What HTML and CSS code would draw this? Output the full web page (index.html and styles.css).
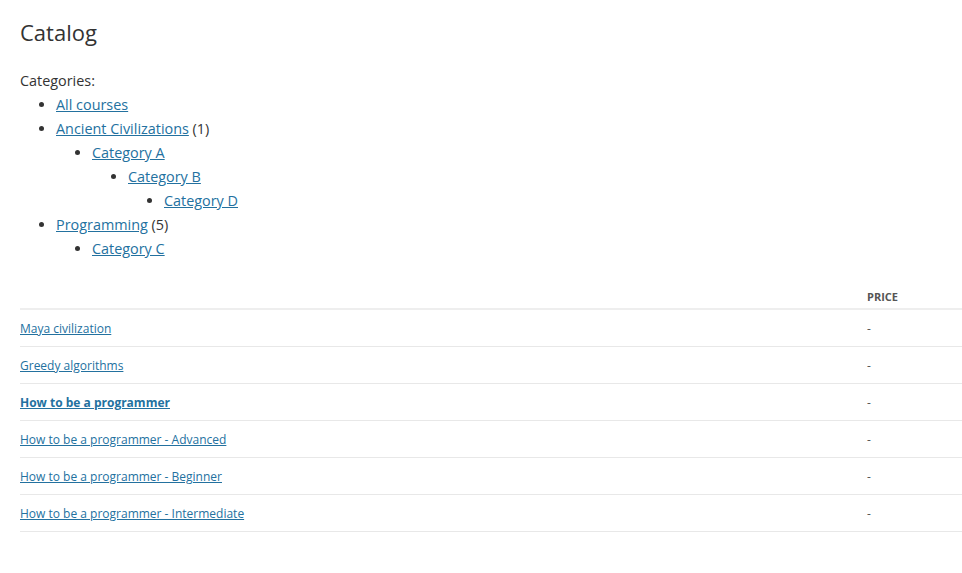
FILE: index.html
```html
<!DOCTYPE html>
<html lang="en">
  <head>
    <meta charset="UTF-8" />
    <title>Catalog</title>
    <link rel="stylesheet" href="styles.css">
  </head>
  <body>
    <div class="page">
      <h1>Catalog</h1>

      <div class="categories">
        <p>Categories:</p>
        <ul>
          <li><a href="#">All courses</a></li>
          <li>
            <a href="#">Ancient Civilizations</a> (1)
            <ul>
              <li>
                <a href="#">Category A</a>
                <ul>
                  <li>
                    <a href="#">Category B</a>
                    <ul>
                      <li><a href="#">Category D</a></li>
                    </ul>
                  </li>
                </ul>
              </li>
            </ul>
          </li>
          <li>
            <a href="#">Programming</a> (5)
            <ul>
              <li><a href="#">Category C</a></li>
            </ul>
          </li>
        </ul>
      </div>

      <!-- course list -->
      <table class="courses">
        <thead>
          <tr>
            <th></th>
            <th class="price">Price</th>
          </tr>
        </thead>
        <tbody>
          <tr><td><a href="#">Maya civilization</a></td><td class="price">-</td></tr>
          <tr><td><a href="#">Greedy algorithms</a></td><td class="price">-</td></tr>
          <tr><td><a href="#" class="bundle">How to be a programmer</a></td><td class="price">-</td></tr>
          <tr><td><a href="#">How to be a programmer - Advanced</a></td><td class="price">-</td></tr>
          <tr><td><a href="#">How to be a programmer - Beginner</a></td><td class="price">-</td></tr>
          <tr><td><a href="#">How to be a programmer - Intermediate</a></td><td class="price">-</td></tr>
        </tbody>
      </table>
    </div>
  </body>
</html>
```

FILE: styles.css
```css
body {
  font-family: "Open Sans", Arial, sans-serif;
  background-color: #fff;
  color: #333;
  margin: 0;
  padding: 0;
}

a {
  color: #23719f;
  text-decoration: underline;
}

.page {
  padding: 17px 0 0 20px;
}

h1 {
  font-size: 22px;
  font-weight: normal;
  line-height: 30px;
  margin: 0 0 22px 0;
}

.categories {
  font-size: 14.4px;
  line-height: 24px;
}

.categories p {
  margin: 0;
}

.categories ul {
  margin: 0;
  padding-left: 36px;
  list-style: disc;
}

.courses {
  width: 100%;
  border-collapse: collapse;
  margin-top: 23px;
  font-size: 12px;
}

.courses th {
  text-align: left;
  font-size: 11px;
  font-weight: bold;
  text-transform: uppercase;
  color: #555;
  height: 24px;
  padding: 0;
  vertical-align: middle;
  border-bottom: 2px solid #eee;
}

.courses td {
  height: 36px;
  padding: 0;
  border-bottom: 1px solid #e8e8e8;
  vertical-align: middle;
}

.courses .price {
  width: 95px;
}

.courses td.price {
  color: #555;
}

.bundle {
  font-weight: bold;
}
```
